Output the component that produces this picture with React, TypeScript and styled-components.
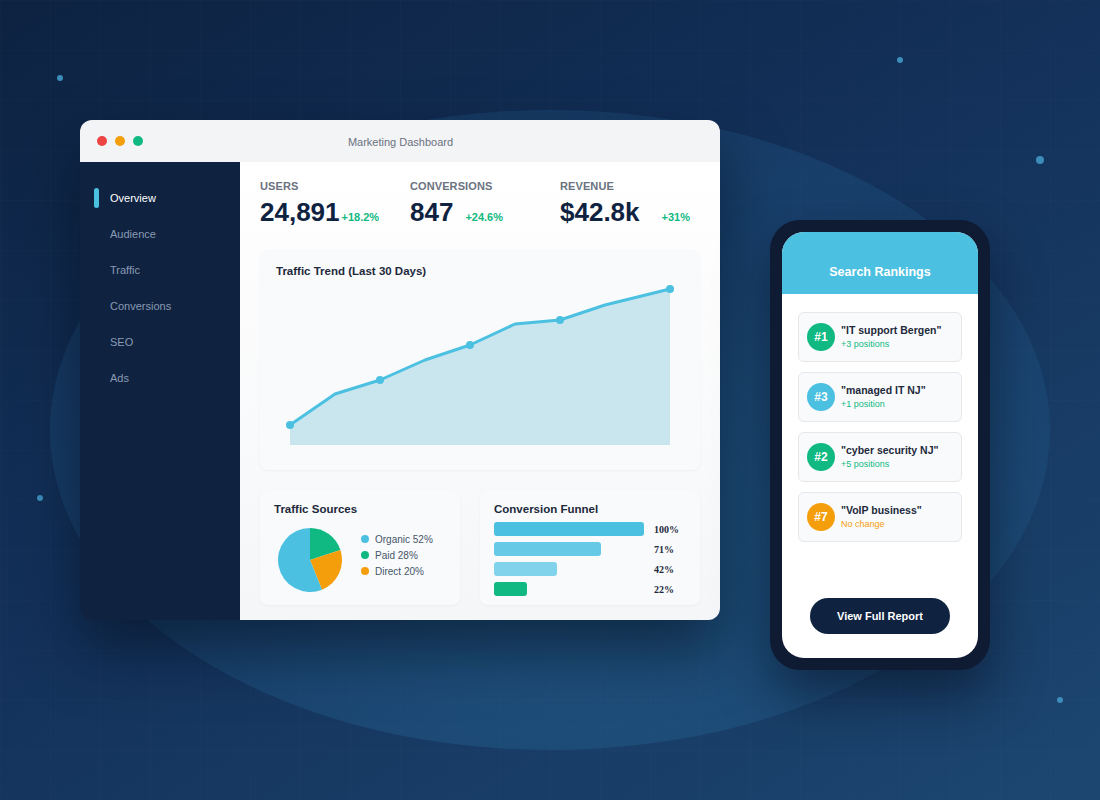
import React from 'react';
import styled, { createGlobalStyle } from 'styled-components';

const GlobalStyle = createGlobalStyle`
    html, body {
        margin: 0;
        padding: 0;
        background: #0d2240;
    }
    body {
        font-family: 'Liberation Sans', Arial, sans-serif;
    }
`;

const BLUE = '#4bc0e0';
const GREEN = '#10b981';
const ORANGE = '#f59e0b';
const NAVY = '#0f2341';

const stats = [
    { label: 'USERS', value: '24,891', change: '+18.2%', offset: 2 },
    { label: 'CONVERSIONS', value: '847', change: '+24.6%', offset: 12 },
    { label: 'REVENUE', value: '$42.8k', change: '+31%', offset: 22 },
];

const navItems = ['Overview', 'Audience', 'Traffic', 'Conversions', 'SEO', 'Ads'];

const trend = [
    [14, 145],
    [59, 114],
    [104, 100],
    [149, 80],
    [194, 65],
    [239, 44],
    [284, 40],
    [329, 25],
    [394, 9],
];

const sources = [
    { label: 'Organic 52%', color: BLUE },
    { label: 'Paid 28%', color: GREEN },
    { label: 'Direct 20%', color: ORANGE },
];

const funnel = [
    { pct: 100, color: '#4bc0e0' },
    { pct: 71, color: '#66c9e6' },
    { pct: 42, color: '#80d3ea' },
    { pct: 22, color: GREEN },
];

const rankings = [
    { rank: '#1', term: '"IT support Bergen"', note: '+3 positions', color: GREEN, noteColor: GREEN },
    { rank: '#3', term: '"managed IT NJ"', note: '+1 position', color: BLUE, noteColor: GREEN },
    { rank: '#2', term: '"cyber security NJ"', note: '+5 positions', color: GREEN, noteColor: GREEN },
    { rank: '#7', term: '"VoIP business"', note: 'No change', color: ORANGE, noteColor: ORANGE },
];

const dots = [
    { x: 60, y: 78, r: 3 },
    { x: 900, y: 60, r: 3 },
    { x: 1040, y: 160, r: 4 },
    { x: 40, y: 498, r: 3 },
    { x: 1060, y: 700, r: 3 },
];

const Stage = styled.div`
    position: relative;
    width: 1100px;
    height: 800px;
    overflow: hidden;
    background: linear-gradient(150deg, #0d2241 0%, #13315a 45%, #1c4670 100%);

    &::before {
        content: '';
        position: absolute;
        inset: 0;
        background-image: linear-gradient(rgba(255, 255, 255, 0.012) 1px, transparent 1px),
            linear-gradient(90deg, rgba(255, 255, 255, 0.012) 1px, transparent 1px);
        background-size: 50px 50px;
    }
`;

const Glow = styled.div`
    position: absolute;
    left: 50px;
    top: 110px;
    width: 1000px;
    height: 640px;
    border-radius: 50%;
    background: radial-gradient(ellipse at 50% 62%, rgba(42, 112, 158, 0.5) 0%, rgba(36, 96, 146, 0.3) 60%, rgba(34, 90, 140, 0.22) 100%);
`;

const Dot = styled.span<{ $r: number }>`
    position: absolute;
    width: ${(p) => p.$r * 2}px;
    height: ${(p) => p.$r * 2}px;
    margin: -${(p) => p.$r}px 0 0 -${(p) => p.$r}px;
    border-radius: 50%;
    background: #3d8dbb;
`;

const Window = styled.div`
    position: absolute;
    left: 80px;
    top: 120px;
    width: 640px;
    height: 500px;
    border-radius: 12px;
    overflow: hidden;
    display: flex;
    flex-direction: column;
    box-shadow: 0 30px 60px rgba(3, 12, 28, 0.55);
`;

const TitleBar = styled.div`
    position: relative;
    height: 42px;
    flex: none;
    background: #f3f4f6;
    display: flex;
    align-items: center;
    padding-left: 17px;
    gap: 8px;
`;

const Light = styled.span<{ $color: string }>`
    width: 10px;
    height: 10px;
    border-radius: 50%;
    background: ${(p) => p.$color};
`;

const WindowTitle = styled.div`
    flex: 1;
    text-align: center;
    margin: 2px 70px 0 0;
    font-size: 11px;
    color: #6b7280;
`;

const Body = styled.div`
    flex: 1;
    display: flex;
    min-height: 0;
`;

const Sidebar = styled.nav`
    width: 160px;
    flex: none;
    background: #0f2240;
    padding-top: 18px;
    box-sizing: border-box;
`;

const NavItem = styled.div<{ $active?: boolean }>`
    position: relative;
    height: 36px;
    display: flex;
    align-items: center;
    padding-left: 30px;
    font-size: 11px;
    color: ${(p) => (p.$active ? '#ffffff' : '#8a9bb4')};

    &::before {
        content: '';
        display: ${(p) => (p.$active ? 'block' : 'none')};
        position: absolute;
        left: 14px;
        top: 8px;
        width: 5px;
        height: 20px;
        border-radius: 3px;
        background: ${BLUE};
    }
`;

const Main = styled.main`
    flex: 1;
    min-width: 0;
    background: linear-gradient(180deg, #ffffff 0%, #f5f6f8 100%);
    padding: 18px 20px 15px;
    display: flex;
    flex-direction: column;
    gap: 20px;
`;

const StatsRow = styled.div`
    display: grid;
    grid-template-columns: 150px 150px 1fr;
    margin-bottom: 4px;
`;

const StatLabel = styled.div`
    font-size: 11px;
    font-weight: 700;
    line-height: 13px;
    color: #6b7280;
    letter-spacing: 0.1px;
`;

const StatValueRow = styled.div`
    display: flex;
    align-items: baseline;
    margin-top: 5px;
`;

const StatValue = styled.div`
    font-size: 26px;
    font-weight: 700;
    line-height: 28px;
    color: ${NAVY};
`;

const StatChange = styled.span<{ $offset: number }>`
    margin-left: ${(p) => p.$offset}px;
    font-size: 11px;
    font-weight: 700;
    color: ${GREEN};
`;

const Card = styled.section`
    background: #f8fafc;
    border-radius: 8px;
    box-shadow: 0 1px 3px rgba(15, 35, 65, 0.04);
`;

const ChartCard = styled(Card)`
    height: 220px;
    padding: 14px 16px 0;
    box-sizing: border-box;
`;

const CardTitle = styled.h3`
    margin: 0;
    font-size: 11.5px;
    line-height: 14px;
    font-weight: 700;
    color: #1e293b;
`;

const ChartSvg = styled.svg`
    display: block;
    margin-top: 2px;
`;

const BottomRow = styled.div`
    display: grid;
    grid-template-columns: 200px 220px;
    gap: 20px;
`;

const SmallCard = styled(Card)`
    height: 115px;
    padding: 12px 14px 0;
    box-sizing: border-box;
`;

const PieRow = styled.div`
    display: flex;
    align-items: center;
    margin-top: 12px;
    padding-left: 4px;
    gap: 19px;
`;

const Legend = styled.ul`
    list-style: none;
    margin: -10px 0 0;
    padding: 0;
    display: flex;
    flex-direction: column;
    gap: 3px;
`;

const LegendItem = styled.li<{ $color: string }>`
    display: flex;
    align-items: center;
    gap: 6px;
    font-size: 10px;
    line-height: 13px;
    color: #475569;

    &::before {
        content: '';
        width: 8px;
        height: 8px;
        border-radius: 50%;
        background: ${(p) => p.$color};
    }
`;

const FunnelList = styled.div`
    margin-top: 6px;
    display: flex;
    flex-direction: column;
    gap: 6px;
`;

const FunnelRow = styled.div`
    display: flex;
    align-items: center;
`;

const FunnelTrack = styled.div`
    width: 150px;
    margin-right: 10px;
`;

const FunnelBar = styled.div<{ $color: string }>`
    height: 14px;
    border-radius: 3px;
    background: ${(p) => p.$color};
`;

const FunnelPct = styled.span`
    font-family: 'Liberation Serif', 'Times New Roman', serif;
    font-weight: 700;
    font-size: 10px;
    color: #1e293b;
`;

const Phone = styled.div`
    position: absolute;
    left: 770px;
    top: 220px;
    width: 220px;
    height: 450px;
    padding: 12px;
    box-sizing: border-box;
    border-radius: 30px;
    background: #0f1a33;
    box-shadow: 0 25px 50px rgba(3, 10, 25, 0.5);
`;

const Screen = styled.div`
    height: 100%;
    border-radius: 22px;
    overflow: hidden;
    background: #ffffff;
    display: flex;
    flex-direction: column;
`;

const PhoneHeader = styled.header`
    height: 62px;
    flex: none;
    background: ${BLUE};
    display: flex;
    align-items: center;
    justify-content: center;
    padding-top: 18px;
    box-sizing: border-box;
    color: #ffffff;
    font-size: 12.5px;
    font-weight: 700;
`;

const RankList = styled.div`
    padding: 18px 16px 0;
    display: flex;
    flex-direction: column;
    gap: 10px;
`;

const RankCard = styled.div`
    height: 50px;
    box-sizing: border-box;
    display: flex;
    align-items: center;
    gap: 6px;
    padding-left: 8px;
    background: #f8fafc;
    border: 1px solid #e5e7eb;
    border-radius: 6px;
`;

const Badge = styled.div<{ $color: string }>`
    width: 28px;
    height: 28px;
    border-radius: 50%;
    flex: none;
    background: ${(p) => p.$color};
    color: #ffffff;
    font-size: 12px;
    font-weight: 700;
    display: flex;
    align-items: center;
    justify-content: center;
`;

const RankText = styled.div`
    display: flex;
    flex-direction: column;
    gap: 3px;
    margin-top: -1px;
`;

const RankTerm = styled.div`
    font-size: 10.5px;
    font-weight: 700;
    color: #1e293b;
`;

const RankNote = styled.div<{ $color: string }>`
    font-size: 9px;
    color: ${(p) => p.$color};
`;

const ReportButton = styled.button`
    margin: auto auto 24px;
    width: 140px;
    height: 36px;
    border: 0;
    border-radius: 18px;
    background: ${NAVY};
    color: #ffffff;
    font-family: inherit;
    font-size: 11px;
    font-weight: 700;
`;

const TrendChart = () => {
    const line = trend.map(([x, y]) => `${x},${y}`).join(' ');
    const area = `M14,165 L${trend.map(([x, y]) => `${x},${y}`).join(' L')} L394,165 Z`;
    return (
        <ChartSvg width="408" height="176" viewBox="0 0 408 176">
            <path d={area} fill="#c9e6ef" />
            <polyline points={line} fill="none" stroke={BLUE} strokeWidth="3" strokeLinejoin="round" />
            {trend
                .filter((_, i) => i % 2 === 0)
                .map(([x, y]) => (
                    <circle key={x} cx={x} cy={y} r="4" fill={BLUE} />
                ))}
        </ChartSvg>
    );
};

const Pie = () => (
    <svg width="64" height="64" viewBox="0 0 64 64">
        <path d="M32,32 L32,0 A32,32 0 0 1 62.43,22.11 Z" fill={GREEN} />
        <path d="M32,32 L62.43,22.11 A32,32 0 0 1 43.99,61.67 Z" fill={ORANGE} />
        <path d="M32,32 L43.99,61.67 A32,32 0 1 1 32,0 Z" fill={BLUE} />
    </svg>
);

const App = () => (
    <Stage>
        <GlobalStyle />
        <Glow />
        {dots.map((d) => (
            <Dot key={d.x} $r={d.r} style={{ left: d.x, top: d.y }} />
        ))}

        <Window>
            <TitleBar>
                <Light $color="#ef4444" />
                <Light $color={ORANGE} />
                <Light $color={GREEN} />
                <WindowTitle>Marketing Dashboard</WindowTitle>
            </TitleBar>
            <Body>
                <Sidebar>
                    {navItems.map((item, i) => (
                        <NavItem key={item} $active={i === 0}>
                            {item}
                        </NavItem>
                    ))}
                </Sidebar>
                <Main>
                    <StatsRow>
                        {stats.map((s) => (
                            <div key={s.label}>
                                <StatLabel>{s.label}</StatLabel>
                                <StatValueRow>
                                    <StatValue>{s.value}</StatValue>
                                    <StatChange $offset={s.offset}>{s.change}</StatChange>
                                </StatValueRow>
                            </div>
                        ))}
                    </StatsRow>

                    <ChartCard>
                        <CardTitle>Traffic Trend (Last 30 Days)</CardTitle>
                        <TrendChart />
                    </ChartCard>

                    <BottomRow>
                        <SmallCard>
                            <CardTitle>Traffic Sources</CardTitle>
                            <PieRow>
                                <Pie />
                                <Legend>
                                    {sources.map((s) => (
                                        <LegendItem key={s.label} $color={s.color}>
                                            {s.label}
                                        </LegendItem>
                                    ))}
                                </Legend>
                            </PieRow>
                        </SmallCard>
                        <SmallCard>
                            <CardTitle>Conversion Funnel</CardTitle>
                            <FunnelList>
                                {funnel.map((f) => (
                                    <FunnelRow key={f.pct}>
                                        <FunnelTrack>
                                            <FunnelBar $color={f.color} style={{ width: `${f.pct}%` }} />
                                        </FunnelTrack>
                                        <FunnelPct>{f.pct}%</FunnelPct>
                                    </FunnelRow>
                                ))}
                            </FunnelList>
                        </SmallCard>
                    </BottomRow>
                </Main>
            </Body>
        </Window>

        <Phone>
            <Screen>
                <PhoneHeader>Search Rankings</PhoneHeader>
                <RankList>
                    {rankings.map((r) => (
                        <RankCard key={r.term}>
                            <Badge $color={r.color}>{r.rank}</Badge>
                            <RankText>
                                <RankTerm>{r.term}</RankTerm>
                                <RankNote $color={r.noteColor}>{r.note}</RankNote>
                            </RankText>
                        </RankCard>
                    ))}
                </RankList>
                <ReportButton>View Full Report</ReportButton>
            </Screen>
        </Phone>
    </Stage>
);

export default App;
